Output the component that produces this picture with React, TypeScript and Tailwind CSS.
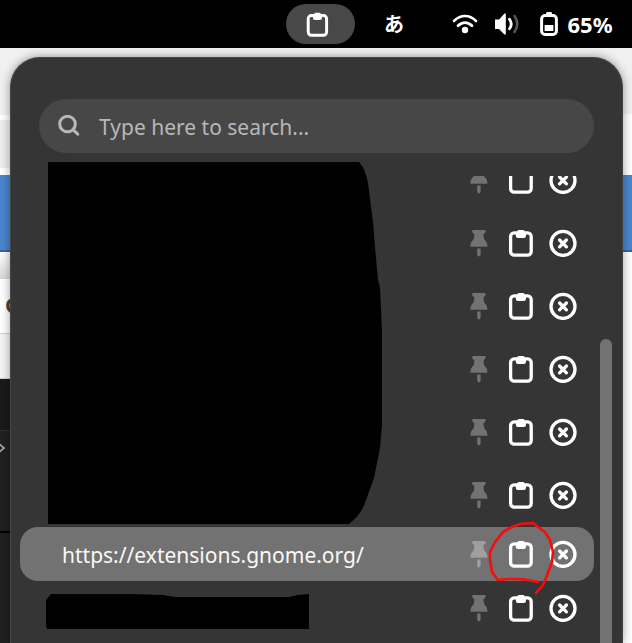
import React from "react";

function ClipboardIcon({ size = 28 }: { size?: number }) {
  return (
    <svg width={size} height={size} viewBox="0 0 28 28" fill="none" aria-hidden="true">
      <rect x="3.6" y="3.9" width="20.6" height="22.2" rx="3.6" stroke="currentColor" strokeWidth="3.3" />
      <path d="M10.3 3.2V2.4Q10.3.9 11.8.9H16.2Q17.7.9 17.7 2.4V3.2H19V6.8Q19 9 16.8 9H11Q8.8 9 8.8 6.8V3.2Z" fill="currentColor" />
    </svg>
  );
}

function PinIcon() {
  return (
    <svg width="28" height="28" viewBox="0 0 28 28" fill="currentColor" aria-hidden="true">
      <path d="M8 .9H20Q21.3 1.6 20.6 3.2Q18.9 4.5 18.5 5.5Q18.4 8.5 19.4 10.8Q22.4 13 22.4 17.7H5.4Q5.4 13 8.4 10.8Q9.4 8.5 9.3 5.5Q8.9 4.5 7.2 3.2Q6.5 1.6 8 .9Z" />
      <path d="M12.2 19.6H15.6V25.4L14.9 27.3H12.9L12.2 25.4Z" />
    </svg>
  );
}

function RemoveIcon() {
  return (
    <svg width="28" height="28" viewBox="0 0 28 28" fill="none" stroke="currentColor" aria-hidden="true">
      <circle cx="14" cy="14.4" r="12" strokeWidth="3.3" />
      <path d="M10.6 11L17.4 17.8M17.4 11L10.6 17.8" strokeWidth="3.3" strokeLinecap="round" />
    </svg>
  );
}

function WifiIcon() {
  return (
    <svg width="26" height="26" viewBox="0 0 26 26" fill="none" stroke="currentColor" aria-hidden="true">
      <path d="M2 10Q7 5 13 5T24 10" strokeWidth="2.6" strokeLinecap="round" />
      <path d="M6 14.8Q9.2 11.6 13 11.6T20 14.8" strokeWidth="2.8" strokeLinecap="round" />
      <circle cx="13" cy="19" r="3.2" fill="currentColor" stroke="none" />
    </svg>
  );
}

function VolumeIcon() {
  return (
    <svg width="26" height="26" viewBox="0 0 26 26" fill="none" stroke="currentColor" aria-hidden="true">
      <path d="M1 8.5H5L10.5 2.5H11.8V23.5H10.5L5 18H1Z" fill="currentColor" stroke="none" />
      <path d="M15.5 8.2Q19 13 15.5 17.8" strokeWidth="2.8" strokeLinecap="round" />
      <path d="M20.5 5Q26 13 20.5 21" strokeWidth="2.6" strokeLinecap="round" className="text-[#555555]" />
    </svg>
  );
}

function BatteryIcon() {
  return (
    <svg width="18" height="26" viewBox="0 0 18 26" fill="none" aria-hidden="true">
      <rect x="1.6" y="4.6" width="14.8" height="18.8" rx="3.4" stroke="currentColor" strokeWidth="3" />
      <path d="M6 4V2.4Q6 1 7.4 1H10.6Q12 1 12 2.4V4ZM4.6 14H13.4V20H4.6Z" fill="currentColor" />
    </svg>
  );
}

function TopBar() {
  return (
    <header className="flex h-12 items-center justify-end bg-black pr-[18px] text-white">
      <button type="button" aria-label="Clipboard history" className="flex h-10 w-[69px] items-center justify-center rounded-full bg-[#484848] pr-1.5">
        <ClipboardIcon size={25} />
      </button>
      <button type="button" className="ml-[28px] w-[22px] font-['Noto_Sans_CJK_JP',sans-serif] text-[20px] leading-6 font-bold">
        あ
      </button>
      <button type="button" aria-label="System menu" className="ml-[47px] flex items-center font-['Noto_Sans',sans-serif] text-[22px] leading-6 font-bold">
        <WifiIcon />
        <span className="ml-4">
          <VolumeIcon />
        </span>
        <span className="ml-5">
          <BatteryIcon />
        </span>
        <span className="ml-2 w-12">65%</span>
      </button>
    </header>
  );
}

function Backdrop() {
  return (
    <div aria-hidden="true" className="absolute inset-0 grid grid-cols-2 overflow-hidden bg-white">
      <div className="flex flex-col">
        <div className="h-[67px] bg-[#f0f0f0]" />
        <div className="mt-[5px] h-12 bg-[#eeeeee]" />
        <div className="mt-[7px] h-[77px] border-b-2 border-[#3865a0] bg-[#4a86cf]" />
        <div className="h-[27px] bg-linear-to-b from-white to-[#d8d8d8]" />
        <div className="h-[54px] pt-3.5 pl-[5px] font-['Noto_Sans',sans-serif] text-[21px] leading-6 font-bold text-[#444444]">G</div>
        <div className="h-[46px] border-y border-[#d0d0d0] bg-[#f5f4f2]" />
        <div className="h-[51px] bg-[#1a1a1a]" />
        <div className="h-[101px] border-t border-[#303030] bg-[#202020] pt-2.5">
          <svg width="8" height="14" viewBox="0 0 8 14" fill="none">
            <path d="M-2 2L4 7L-2 12" stroke="#98a0a8" strokeWidth="1.8" />
          </svg>
        </div>
        <div className="flex-1 border-t-2 border-black bg-[#202020]" />
      </div>
      <div>
        <div className="h-[66px] bg-[#f0f0f0]" />
        <div className="mt-[61px] h-[77px] border-b-2 border-[#3865a0] bg-[#4a86cf]" />
      </div>
    </div>
  );
}

function SearchBox() {
  return (
    <label className="mx-7 flex h-[54px] items-center rounded-full bg-[#474747] pl-[18px] text-[#b8b8b8]">
      <svg width="24" height="24" viewBox="0 0 24 24" fill="none" stroke="currentColor" strokeWidth="3" strokeLinecap="round" aria-hidden="true">
        <circle cx="10.5" cy="10" r="7.8" />
        <path d="M16.2 15.8L20.8 20.2" />
      </svg>
      <input
        type="text"
        aria-label="Search"
        placeholder="Type here to search..."
        className="ml-[18px] min-w-0 flex-1 bg-transparent pt-0.5 text-[21px] leading-7 text-white outline-none placeholder:text-[#b8b8b8]"
      />
    </label>
  );
}

function HistoryRow({ text = "", selected = false }: { text?: string; selected?: boolean }) {
  return (
    <li className={"flex h-[54px] items-center rounded-[18px] pr-2.5 pl-[42px] " + (selected ? "bg-[#727272]" : "")}>
      <span className="min-w-0 flex-1 truncate pt-0.5 text-[21px] leading-7 text-[#f8f8f8]">{text}</span>
      <button type="button" aria-label="Pin" className={"flex w-[42px] justify-center " + (selected ? "text-[#9f9f9f]" : "text-[#727272]")}>
        <PinIcon />
      </button>
      <button type="button" aria-label="Paste" className="flex w-[42px] justify-center text-white">
        <ClipboardIcon />
      </button>
      <button type="button" aria-label="Remove" className="flex w-[42px] justify-center text-white">
        <RemoveIcon />
      </button>
    </li>
  );
}

function Redactions() {
  return (
    <svg width="400" height="480" viewBox="0 0 400 480" aria-hidden="true" className="absolute top-[104px] left-0">
      <path d="M37 0H348Q354 6 357 21L362 60L364 85L367 118L369 126L371 170V263L369 286L363 316L355 338Q351 352 338 362H37Z" />
      <path d="M40 432H118L153 433Q160 435 168 435H278L287 433L298 432V467H36L35 464V438Z" />
    </svg>
  );
}

function HandCircle() {
  return (
    <svg width="80" height="84" viewBox="0 0 80 84" fill="none" aria-hidden="true" className="absolute top-[460px] right-[57px]">
      <path
        d="M53 64L48 63L42 62L35 61H23L13 62L7 54L5 42V34L10 24L18 14L27 9L35 6L48 5L53 9L60 14L65 22L68 34L67 44L61 60L58 67L51 75"
        stroke="#fa0a0a"
        strokeWidth="2.6"
        strokeLinecap="round"
        strokeLinejoin="round"
      />
    </svg>
  );
}

export default function App() {
  return (
    <div className="flex h-screen flex-col overflow-hidden font-['Noto_Sans',sans-serif]">
      <TopBar />
      <main className="relative flex min-h-0 flex-1 flex-col">
        <Backdrop />
        <section className="relative mt-[9px] mr-[9px] ml-2.5 flex min-h-0 flex-1 flex-col rounded-t-[30px] border border-b-0 border-[#454545] bg-[#353535] pt-[41px] shadow-[0_0_10px_rgba(0,0,0,0.4)]">
          <SearchBox />
          <div className="mt-[23px] flex min-h-0 flex-1 overflow-hidden pr-2.5 pl-[9px]">
            <div className="-mt-[23px] flex flex-1 flex-col gap-[5px]">
              <ul className="flex flex-col gap-[9px]">
                {[0, 1, 2, 3, 4, 5].map((i) => (
                  <HistoryRow key={i} />
                ))}
              </ul>
              <ul>
                <HistoryRow selected text="https://extensions.gnome.org/" />
                <HistoryRow />
              </ul>
            </div>
            <div className="mt-[163px] ml-1.5 w-3 rounded-t-full bg-[#727272]" />
          </div>
          <Redactions />
          <HandCircle />
        </section>
      </main>
    </div>
  );
}
